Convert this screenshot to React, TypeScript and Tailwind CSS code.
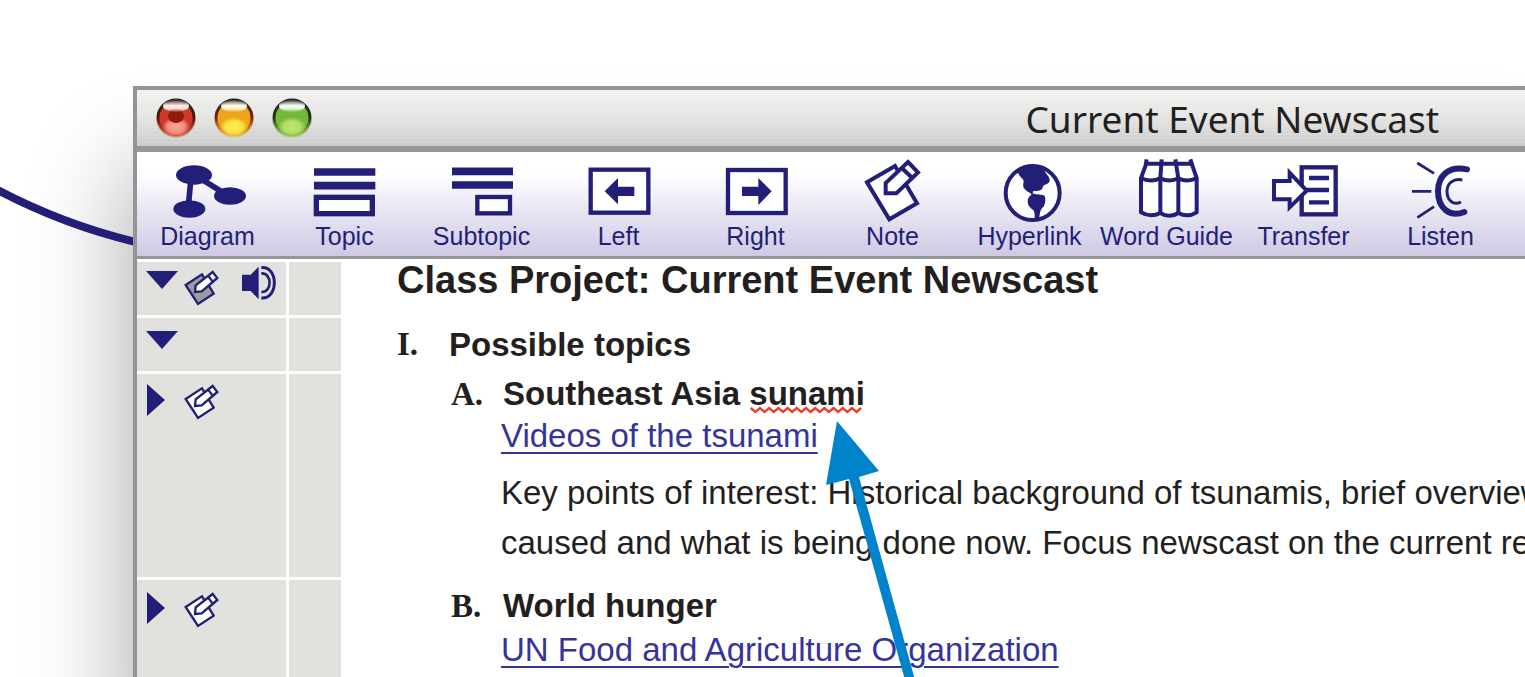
import type { ReactNode } from 'react'

const INK = '#231f78'

function ToolSvg({ children }: { children: ReactNode }) {
  return (
    <svg viewBox="0 0 240 192" className="h-16 w-20" fill="none" stroke={INK} aria-hidden="true">
      {children}
    </svg>
  )
}

const TOOLS: { label: string; icon: ReactNode }[] = [
  {
    label: 'Diagram',
    icon: (
      <>
        <path d="M69 60 61 145" strokeWidth="17" />
        <path d="M98 62 172 108" strokeWidth="17" />
        <g fill={INK} stroke="none">
          <ellipse cx="78" cy="51" rx="54" ry="29" />
          <ellipse cx="186" cy="114" rx="48" ry="26" />
          <ellipse cx="64" cy="153" rx="48" ry="26" />
        </g>
      </>
    ),
  },
  {
    label: 'Topic',
    icon: (
      <>
        <path d="M27 42h184M27 83h184" strokeWidth="23" />
        <rect x="34" y="118" width="168" height="49" strokeWidth="16" fill="#fff" />
      </>
    ),
  },
  {
    label: 'Subtopic',
    icon: (
      <>
        <path d="M30 40h183M30 81h183" strokeWidth="23" />
        <rect x="106" y="117" width="98" height="49" strokeWidth="13" fill="#fff" />
      </>
    ),
  },
  {
    label: 'Left',
    icon: (
      <>
        <rect x="35" y="35" width="173" height="129" strokeWidth="13" fill="#fff" />
        <path d="M77 100 117 60V86H166V114H117V139Z" fill={INK} stroke="none" />
      </>
    ),
  },
  {
    label: 'Right',
    icon: (
      <>
        <rect x="36" y="36" width="173" height="129" strokeWidth="13" fill="#fff" />
        <path d="M167 100 127 60V86H78V114H127V141Z" fill={INK} stroke="none" />
      </>
    ),
  },
  {
    label: 'Note',
    icon: (
      <g strokeWidth="12" fill="#fff">
        <path d="M42 73 126 24 192 136 109 184Z" />
        <path d="M165 12 195 43 130 106H98V75Z" />
        <path d="M147 31 178 60" />
      </g>
    ),
  },
  {
    label: 'Hyperlink',
    icon: (
      <>
        <circle cx="128" cy="105" r="81" strokeWidth="12" fill="#fff" />
        <path
          d="M84 42C96 28 112 23 128 23C148 24 162 32 168 46C176 56 182 64 178 72C173 80 160 78 158 88C156 98 146 100 130 99L128 106C136 110 146 108 164 113C168 122 166 136 161 146C152 152 150 160 147 186H134C135 172 134 162 130 156C120 150 113 142 113 130C113 120 118 116 125 109C118 102 104 98 100 86C98 78 103 72 100 66C95 58 86 54 84 42Z"
          fill={INK}
          stroke="none"
        />
      </>
    ),
  },
  {
    label: 'Word Guide',
    icon: (
      <g strokeWidth="12">
        <path
          d="M42 60V163Q70 180 100 165Q128 182 154 165Q182 180 209 163V60L194 17H58Z"
          fill="#fff"
          strokeLinejoin="round"
        />
        <path d="M42 60Q70 74 100 61Q128 74 154 61Q182 74 209 60" />
        <path d="M100 165V61L104 4M154 165V61L145 4M56 20 59 4M195 20 190 4" />
      </g>
    ),
  },
  {
    label: 'Transfer',
    icon: (
      <>
        <rect x="113" y="28" width="102" height="141" strokeWidth="13" fill="#fff" />
        <path d="M120 96h75M135 60h60M135 133h60" strokeWidth="13" />
        <path d="M30 69H77V44L128 98 77 148V124H30Z" strokeWidth="12" fill="#fff" />
      </>
    ),
  },
  {
    label: 'Listen',
    icon: (
      <>
        <path d="M49 15 99 46M33 100H91M49 179 99 146" strokeWidth="8" />
        <path d="M198 34C142 22 111 54 111 100C111 150 146 180 190 162" strokeWidth="18" strokeLinecap="round" />
        <path d="M184 66C158 60 138 76 138 100C138 126 156 144 180 132" strokeWidth="9" />
      </>
    ),
  },
]

const LIGHTS = [
  { name: 'Close', id: 'red', rim: '#5c0f08', mid: '#cf3a26', low: '#f7a290', dot: true },
  { name: 'Minimize', id: 'amber', rim: '#7a2409', mid: '#f0a41c', low: '#fbee4c', dot: false },
  { name: 'Zoom', id: 'green', rim: '#22330f', mid: '#74b93a', low: '#bfe56a', dot: false },
]

function TrafficLight({ name, id, rim, mid, low, dot }: (typeof LIGHTS)[number]) {
  return (
    <button type="button" aria-label={name} className="size-10">
      <svg viewBox="0 0 40 40" className="size-10" aria-hidden="true">
        <defs>
          <linearGradient id={`${id}-rim`} x1="0" y1="0" x2="0" y2="1">
            <stop offset="0" stopColor="#222" />
            <stop offset="0.5" stopColor={rim} />
            <stop offset="1" stopColor={mid} stopOpacity="0.5" />
          </linearGradient>
          <radialGradient id={`${id}-glow`}>
            <stop offset="0" stopColor={low} />
            <stop offset="0.6" stopColor={low} stopOpacity="0.85" />
            <stop offset="1" stopColor={low} stopOpacity="0" />
          </radialGradient>
          <linearGradient id={`${id}-shine`} x1="0" y1="0" x2="0" y2="1">
            <stop offset="0" stopColor="#555" stopOpacity="0.6" />
            <stop offset="0.45" stopColor="#fff" stopOpacity="0.9" />
            <stop offset="0.7" stopColor="#fff" stopOpacity="0.85" />
            <stop offset="1" stopColor="#fff" stopOpacity="0.1" />
          </linearGradient>
        </defs>
        <circle cx="20" cy="20" r="18" fill={mid} stroke={`url(#${id}-rim)`} strokeWidth="3" />
        <ellipse cx="20" cy="29" rx="14" ry="10" fill={`url(#${id}-glow)`} />
        {dot && <ellipse cx="20" cy="18" rx="8" ry="7" fill="#96190f" />}
        <ellipse cx="20" cy="8" rx="13" ry="6" fill={`url(#${id}-shine)`} />
      </svg>
    </button>
  )
}

function NoteMark({ paper }: { paper: string }) {
  return (
    <svg viewBox="0 0 108 108" className="size-9 shrink-0" stroke={INK} strokeWidth="7" aria-hidden="true">
      <path d="M8 45 57 13 92 71 45 102Z" fill={paper} />
      <path d="M89 6 103 24 56 64 36 66 38 46Z" fill="#fff" />
      <path d="M75 16 89 35" />
    </svg>
  )
}

function Speaker() {
  return (
    <svg viewBox="0 0 102 102" className="size-[34px]" fill="none" stroke={INK} aria-hidden="true">
      <path d="M0 26H26L50 2V100L26 75H0Z" fill={INK} stroke="none" />
      <path d="M58 5C110 0 110 100 58 96" strokeWidth="9" />
      <path d="M58 22C91 20 91 80 58 78" strokeWidth="8" />
    </svg>
  )
}

function Disclosure({ open, label }: { open: boolean; label: string }) {
  return (
    <button type="button" aria-expanded={open} aria-label={label} className="w-[46px] shrink-0 pl-[9px]">
      <svg viewBox="0 0 32 32" className="size-8" fill={INK} aria-hidden="true">
        {open ? <path d="M0 1H32L16 19Z" /> : <path d="M1 0 19 16 1 32Z" />}
      </svg>
    </button>
  )
}

interface RowProps {
  open: boolean
  label: string
  marks?: ReactNode
  className?: string
  gutter: string
  children: ReactNode
}

function OutlineRow({ open, label, marks, className = '', gutter, children }: RowProps) {
  return (
    <section className={`grid grid-cols-[149px_52px_minmax(0,1fr)] gap-[3px] ${className}`}>
      <div className={`flex items-start bg-[#e1e2de] ${gutter}`}>
        <Disclosure open={open} label={label} />
        {marks}
      </div>
      <div className="bg-[#e1e2de]" />
      <div className="pl-[53px] whitespace-nowrap">{children}</div>
    </section>
  )
}

function Item({ mark, children }: { mark: string; children: ReactNode }) {
  return (
    <h2 className="flex font-bold">
      <span className="w-[52px] shrink-0 font-['Liberation_Serif',serif]">{mark}</span>
      <span>{children}</span>
    </h2>
  )
}

const linkClass = 'text-[#35349a] underline decoration-2 underline-offset-[5px]'

export default function App() {
  return (
    <div className="relative flex h-screen flex-col overflow-hidden bg-white pt-[86px] pl-[133px] font-['Liberation_Sans',Arial,sans-serif] text-[33px] text-[#231f20]">
      <svg className="absolute top-0 left-0 z-10 h-[260px] w-[133px]" viewBox="0 0 133 260" fill="none" aria-hidden="true">
        <path d="M-10 186Q62 225 140 243" stroke={INK} strokeWidth="8" />
      </svg>

      <main className="flex flex-1 flex-col border-t-4 border-l-4 border-[#929497] bg-white shadow-[-10px_80px_90px_0px_rgba(0,0,0,0.3)]">
        <header className="flex h-[56px] shrink-0 items-center justify-between bg-[repeating-linear-gradient(to_bottom,rgba(255,255,255,0.12)_0px,rgba(255,255,255,0.12)_1px,transparent_1px,transparent_4px),linear-gradient(to_bottom,#f1f1f0,#e6e7e5_45%,#cbcccb)] pr-[86px] pl-[19px]">
          <div className="flex gap-[18px]">
            {LIGHTS.map(light => (
              <TrafficLight key={light.id} {...light} />
            ))}
          </div>
          <h1 className="pt-0.5 font-['Noto_Sans','Open_Sans',sans-serif] text-[37px] leading-[52px]">
            Current Event Newscast
          </h1>
        </header>

        <nav className="grid h-[113px] shrink-0 grid-cols-10 border-t-[6px] border-b-[3px] border-[#969696] bg-linear-to-b from-white from-20% to-[#cfc9e4] pr-4 pl-0.5">
          {TOOLS.map(tool => (
            <button
              key={tool.label}
              type="button"
              className="flex flex-col items-center pt-[6px] text-[25px] leading-7 whitespace-nowrap text-[#231f78]"
            >
              <ToolSvg>{tool.icon}</ToolSvg>
              {tool.label}
            </button>
          ))}
        </nav>

        <div className="flex min-h-0 flex-1 flex-col gap-[3px] overflow-hidden pt-[3px]">
          <OutlineRow
            open
            label="Class Project"
            className="h-[53px] shrink-0"
            gutter="pt-2"
            marks={
              <>
                <NoteMark paper="#9c9b9d" />
                <span className="-mt-1 ml-[23px]">
                  <Speaker />
                </span>
              </>
            }
          >
            <h2 className="text-[38px] leading-9 font-bold">Class Project: Current Event Newscast</h2>
          </OutlineRow>

          <OutlineRow open label="Possible topics" className="h-[53px] shrink-0 leading-[53px]" gutter="pt-3">
            <Item mark="I.">Possible topics</Item>
          </OutlineRow>

          <OutlineRow
            open={false}
            label="Southeast Asia"
            className="shrink-0"
            gutter="pt-[10px]"
            marks={<NoteMark paper="#fff" />}
          >
            <div className="pb-[9px] pl-[54px] leading-[50px]">
              <div className="leading-10">
                <Item mark="A.">
                  Southeast Asia{' '}
                  <span className="relative inline-block">
                    sunami
                    <svg
                      className="absolute top-[32px] left-0 h-2 w-full"
                      viewBox="0 0 112 8"
                      fill="none"
                      stroke="#e8402f"
                      strokeWidth="2.4"
                      aria-hidden="true"
                    >
                      <path d="M0 2l4.6 4 4.6-4 4.6 4 4.6-4 4.6 4 4.6-4 4.6 4 4.6-4 4.6 4 4.6-4 4.6 4 4.6-4 4.6 4 4.6-4 4.6 4 4.6-4 4.6 4 4.6-4 4.6 4 4.6-4 4.6 4 4.6-4 4.6 4 4.6-4" />
                    </svg>
                  </span>
                </Item>
              </div>
              <p className="pl-[50px] leading-11">
                <a href="#videos" className={linkClass}>Videos of the tsunami</a>
              </p>
              <p className="mt-[10px] pl-[50px]">
                Key points of interest: Historical background of tsunamis, brief overview
                <br />
                caused and what is being done now. Focus newscast on the current re
              </p>
            </div>
          </OutlineRow>

          <OutlineRow
            open={false}
            label="World hunger"
            className="flex-1"
            gutter="pt-3"
            marks={<NoteMark paper="#fff" />}
          >
            <div className="pt-1 pl-[54px] leading-11">
              <Item mark="B.">World hunger</Item>
              <p className="pl-[50px]">
                <a href="#un-fao" className={linkClass}>UN Food and Agriculture Organization</a>
              </p>
            </div>
          </OutlineRow>
        </div>
      </main>

      {/* callout arrow pointing at the misspelled word */}
      <svg
        className="pointer-events-none absolute top-[420px] left-[820px] h-[260px] w-[100px]"
        viewBox="820 420 100 260"
        fill="#0083ca"
        aria-hidden="true"
      >
        <path d="M837 421 879 471 859 477 915 680H905L849 479 826 485Z" />
      </svg>
    </div>
  )
}
